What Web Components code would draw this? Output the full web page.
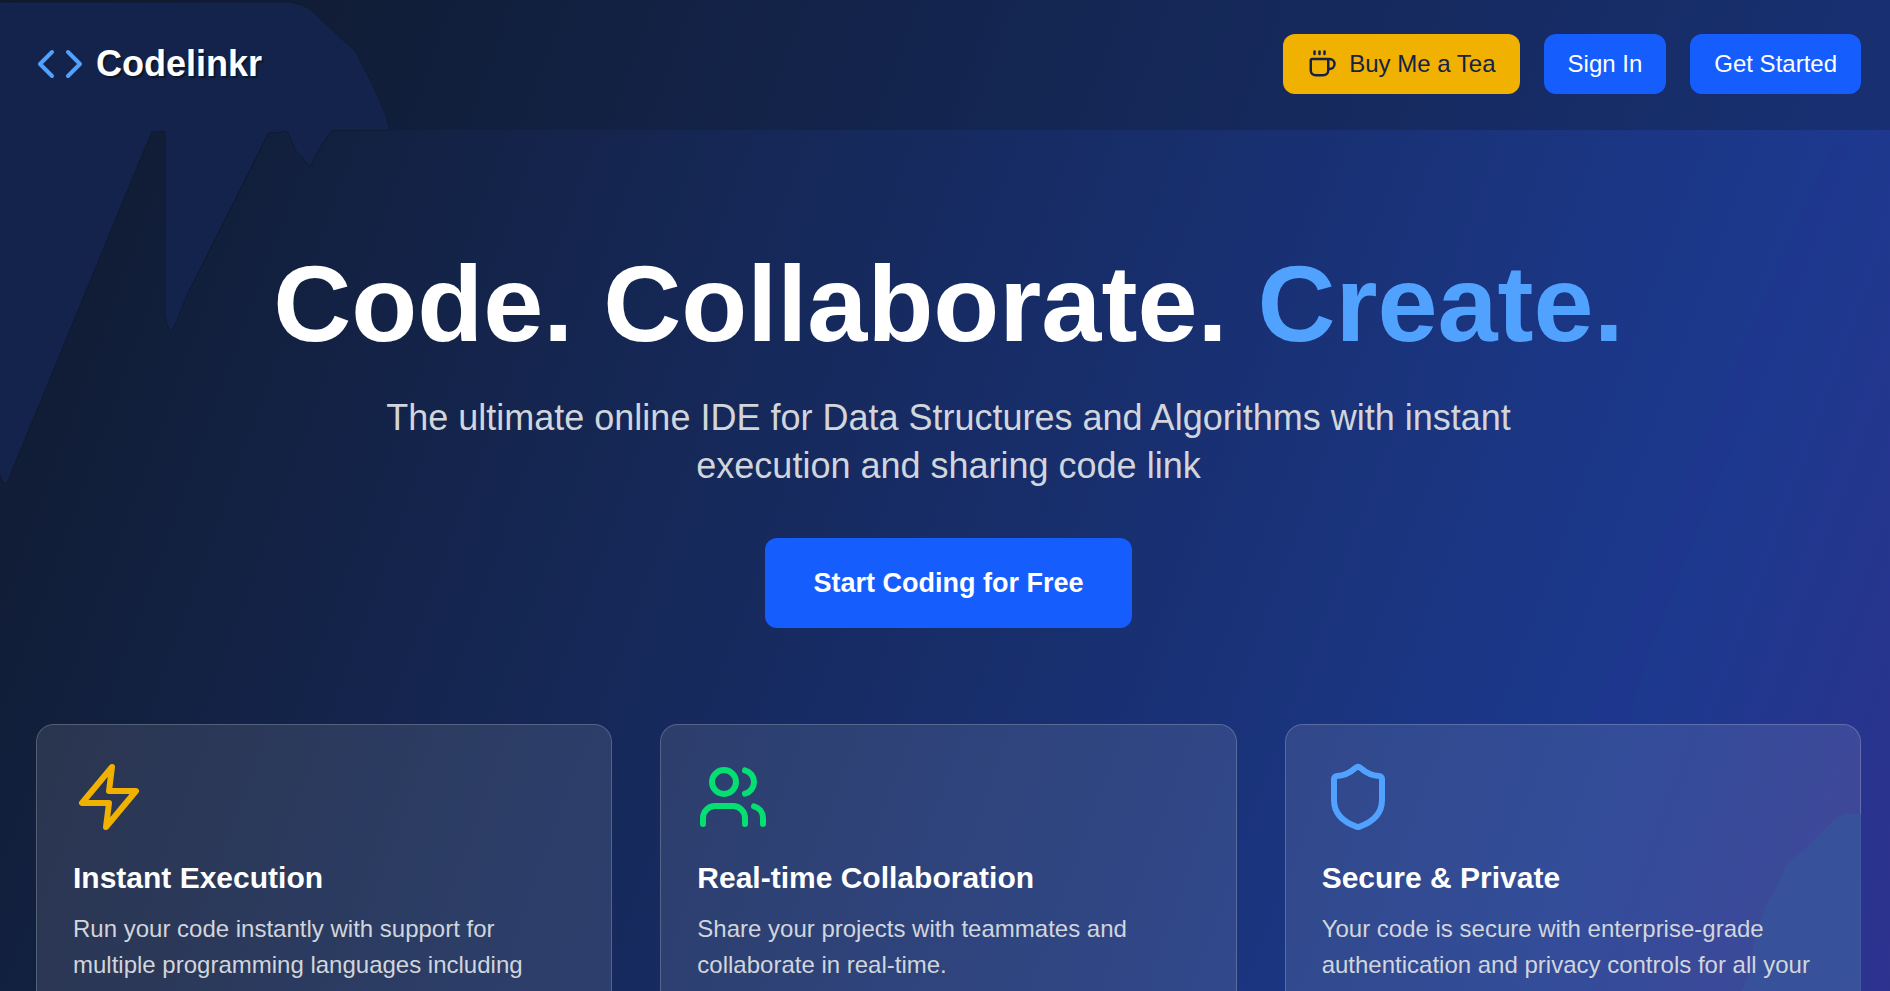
<!DOCTYPE html>
<html lang="en">
<head>
<meta charset="utf-8">
<meta name="viewport" content="width=device-width, initial-scale=1">
<title>Codelinkr</title>
<style>
body {
  margin: 0;
  font-family: "Liberation Sans", Arial, sans-serif;
  font-size: 24px;
  line-height: 36px;
  color: white;
}
</style>
</head>
<body>
<landing-page>
  <site-header slot="header">
    <app-button color="amber" icon="tea">Buy Me a Tea</app-button>
    <app-button>Sign In</app-button>
    <app-button>Get Started</app-button>
  </site-header>
  <hero-banner>
    Code. Collaborate. <span slot="accent">Create.</span>
    <span slot="tagline">The ultimate online IDE for Data Structures and Algorithms with instant execution and sharing code link</span>
    <app-button slot="action" size="large">Start Coding for Free</app-button>
  </hero-banner>
  <feature-grid>
    <feature-card icon="zap" color="#f0b100">
      <span slot="title">Instant Execution</span>
      Run your code instantly with support for multiple programming languages including
    </feature-card>
    <feature-card icon="users" color="#05df72">
      <span slot="title">Real-time Collaboration</span>
      Share your projects with teammates and collaborate in real-time.
    </feature-card>
    <feature-card icon="shield" color="#51a2ff">
      <span slot="title">Secure &amp; Private</span>
      Your code is secure with enterprise-grade authentication and privacy controls for all your
    </feature-card>
  </feature-grid>
</landing-page>

<script>
const icons = {
  code: `<path d="m16 18 6-6-6-6"/><path d="m8 6-6 6 6 6"/>`,
  tea: `<path d="M10 2v2"/><path d="M14 2v2"/><path d="M6 2v2"/>
    <path d="M16 8a1 1 0 0 1 1 1v8a4 4 0 0 1-4 4H7a4 4 0 0 1-4-4V9a1 1 0 0 1 1-1h14a4 4 0 1 1 0 8h-1"/>`,
  zap: `<path d="M13 2 3 14h9l-1 8 10-12h-9l1-8z"/>`,
  users: `<path d="M16 21v-2a4 4 0 0 0-4-4H6a4 4 0 0 0-4 4v2"/><circle cx="9" cy="7" r="4"/>
    <path d="M22 21v-2a4 4 0 0 0-3-3.87"/><path d="M16 3.13a4 4 0 0 1 0 7.75"/>`,
  shield: `<path d="M20 13c0 5-3.5 7.5-7.66 8.95a1 1 0 0 1-.67-.01C7.5 20.5 4 18 4 13V6a1 1 0 0 1 1-1c2 0 4.5-1.2 6.24-2.72a1.17 1.17 0 0 1 1.52 0C14.51 3.81 17 5 19 5a1 1 0 0 1 1 1z"/>`
};

function icon(name) {
  return `<svg class="icon" viewBox="0 0 24 24" fill="none" stroke="currentColor" stroke-width="2"
    stroke-linecap="round" stroke-linejoin="round" aria-hidden="true">${icons[name]}</svg>`;
}

class LandingPage extends HTMLElement {
  constructor() {
    super();
    this.attachShadow({ mode: "open" }).innerHTML = `
<style>
:host {
  display: block;
  position: relative;
  height: 100vh;
  overflow: hidden;
  background: linear-gradient(110deg, #101a2c, #1c398e 84%, #2d328f);
}
main {
  padding: 120px 29px 96px 36px;
}
.art {
  position: absolute;
  top: 0;
  pointer-events: none;
}
.left { left: 0; }
.right { right: 0; }
</style>
<slot name="header"></slot>
<svg class="art left" width="400" height="500" aria-hidden="true">
  <path fill="#14234c" stroke="#101a30" d="M-2 2H290L302 5L310 9L345 42L355 50L373 85L386 115L390 130.500H332L322 144L310 167L303 158L296 151L287 131L283 131L279 133L272 132L268 134L187 295L174 327Q171 336 167 324L165 315V131L152 132L145 148L7 483H3L-2 470Z"/>
</svg>
<svg class="art right" width="300" height="991" aria-hidden="true">
  <path fill="#2a3190" fill-opacity=".22" d="M241 151Q249 136 253 141Q257 146 256 170Q255 195 240 218L210 290L170 385L120 500L60 650L38 723H0L30 655L70 545L140 380L190 265Z"/>
  <path fill="#36549a" fill-opacity=".8" d="M271 814H256L247 817L229 835L216 848L198 862L187 885L176 904L164 940L160 966L152 991H271Z"/>
</svg>
<main><slot></slot></main>`;
  }
}

class SiteHeader extends HTMLElement {
  constructor() {
    super();
    this.attachShadow({ mode: "open" }).innerHTML = `
<style>
:host { display: block; }
header {
  display: flex;
  align-items: center;
  justify-content: space-between;
  padding: 34px 29px 36px 36px;
  background: rgba(16,24,40,.28);
}
.logo, nav {
  position: relative;
  z-index: 1;
  display: flex;
  align-items: center;
}
.logo {
  gap: 12px;
  color: white;
  font-size: 36px;
  font-weight: bold;
  text-decoration: none;
  text-shadow: 2px 2px 1px #0e1828;
}
.icon {
  width: 48px;
  height: 48px;
  color: #51a2ff;
}
nav { gap: 24px; }
</style>
<header>
  <a class="logo" href="#">${icon("code")}<span>Codelinkr</span></a>
  <nav><slot></slot></nav>
</header>`;
  }
}

class AppButton extends HTMLElement {
  constructor() {
    super();
    this.attachShadow({ mode: "open" });
  }

  connectedCallback() {
    const name = this.getAttribute("icon");
    this.shadowRoot.innerHTML = `
<style>
:host { display: inline-block; }
button {
  display: flex;
  align-items: center;
  gap: 12px;
  padding: 12px 24px;
  border: 0;
  border-radius: 12px;
  font: inherit;
  color: white;
  background: #155dfc;
  cursor: pointer;
}
button:hover { filter: brightness(.9); }
:host([color="amber"]) button {
  color: #14224b;
  background: #f0b100;
}
:host([size="large"]) button {
  padding: 24px 48px;
  font-size: 27px;
  line-height: 42px;
  font-weight: bold;
}
.icon {
  width: 30px;
  height: 30px;
}
</style>
<button type="button">${name ? icon(name) : ""}<slot></slot></button>`;
  }
}

class HeroBanner extends HTMLElement {
  constructor() {
    super();
    this.attachShadow({ mode: "open" }).innerHTML = `
<style>
:host {
  display: flex;
  flex-direction: column;
  align-items: center;
  text-align: center;
}
h1 {
  margin: 0 0 36px;
  font-size: 108px;
  line-height: 108px;
}
.accent { color: #51a2ff; }
p {
  max-width: 1152px;
  margin: 0 0 48px;
  font-size: 36px;
  line-height: 48px;
  color: #d1d5dc;
}
</style>
<h1><slot></slot> <span class="accent"><slot name="accent"></slot></span></h1>
<p><slot name="tagline"></slot></p>
<slot name="action"></slot>`;
  }
}

class FeatureGrid extends HTMLElement {
  constructor() {
    super();
    this.attachShadow({ mode: "open" }).innerHTML = `
<style>
:host {
  display: grid;
  grid-template-columns: repeat(3, 1fr);
  gap: 48px;
  margin-top: 96px;
}
</style>
<slot></slot>`;
  }
}

class FeatureCard extends HTMLElement {
  constructor() {
    super();
    this.attachShadow({ mode: "open" });
  }

  connectedCallback() {
    this.shadowRoot.innerHTML = `
<style>
:host {
  display: block;
  padding: 36px;
  border: 1px solid rgba(255,255,255,.28);
  border-radius: 18px;
  background: rgba(255,255,255,.1);
  background-clip: padding-box;
}
.icon {
  display: block;
  width: 72px;
  height: 72px;
  margin-bottom: 24px;
  color: ${this.getAttribute("color")};
}
h3, p {
  position: relative;
  z-index: 1;
}
h3 {
  margin: 0 0 12px;
  font-size: 30px;
  line-height: 42px;
}
p {
  margin: 0;
  color: #d1d5dc;
}
</style>
${icon(this.getAttribute("icon"))}
<h3><slot name="title"></slot></h3>
<p><slot></slot></p>`;
  }
}

customElements.define("landing-page", LandingPage);
customElements.define("site-header", SiteHeader);
customElements.define("app-button", AppButton);
customElements.define("hero-banner", HeroBanner);
customElements.define("feature-grid", FeatureGrid);
customElements.define("feature-card", FeatureCard);
</script>
</body>
</html>
